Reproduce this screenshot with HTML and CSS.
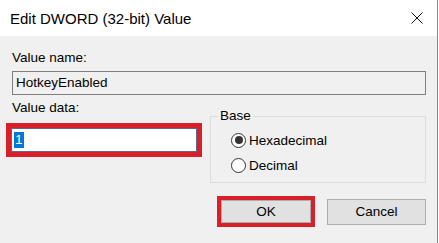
FILE: index.html
```html
<!DOCTYPE html>
<html>
<head>
<meta charset="utf-8">
<link rel="stylesheet" href="styles.css">
</head>
<body>
<div class="window">
  <div class="titlebar">
    <span class="title">Edit DWORD (32-bit) Value</span>
    <svg class="close" width="12" height="12" viewBox="0 0 12 12"><path d="M0.5 0.5 L11.5 11.5 M11.5 0.5 L0.5 11.5" stroke="#111" stroke-width="1" fill="none"/></svg>
  </div>
  <div class="content">
    <div class="label">Value name:</div>
    <div class="textbox readonly">HotkeyEnabled</div>
    <div class="row">
      <div class="left">
        <div class="label">Value data:</div>
        <div class="hl hl-input">
          <div class="textbox focused"><span class="sel">1</span></div>
        </div>
      </div>
      <fieldset class="group">
        <legend>Base</legend>
        <div class="radio"><span class="dot checked"></span><span>Hexadecimal</span></div>
        <div class="radio"><span class="dot"></span><span>Decimal</span></div>
      </fieldset>
    </div>
    <div class="buttons">
      <div class="hl hl-btn"><div class="btn ok">OK</div></div>
      <div class="btn cancel">Cancel</div>
    </div>
  </div>
</div>
</body>
</html>
```
FILE: styles.css
```css
html, body {
  margin: 0;
  padding: 0;
  background: #ffffff;
}
body {
  width: 439px;
  height: 243px;
  overflow: hidden;
  font-family: "Liberation Sans", Arial, sans-serif;
  font-size: 13.5px;
  color: #000;
}
.window {
  width: 437px;
  height: 243px;
  border-right: 1px solid #8a8a8a;
  display: flex;
  flex-direction: column;
}
.titlebar {
  height: 36px;
  flex: none;
  background: #ffffff;
  display: flex;
  align-items: center;
  justify-content: space-between;
  padding-left: 10px;
}
.title {
  font-size: 15px;
  color: #000;
}
.close {
  margin-right: 14px;
  display: block;
}
.content {
  flex: 1;
  background: #f0f0f0;
  padding: 14px 11px 0 12px;
}
.label {
  line-height: 16px;
  height: 16px;
}
.textbox {
  box-sizing: border-box;
  height: 24px;
  line-height: 22px;
  padding-left: 3px;
  border: 1px solid #7f7f7f;
}
.readonly {
  margin-top: 5px;
  background: #f0f0f0;
}
.row {
  display: grid;
  grid-template-columns: 198px 216px;
  margin-top: 5px;
}
.left {
  display: flex;
  flex-direction: column;
}
.hl {
  border: 5px solid #d8202b;
  box-sizing: border-box;
}
.hl-input {
  width: 196px;
  margin-left: -6px;
  margin-top: 7px;
}
.focused {
  background: #fff;
  border-color: #5d6a86;
  padding-left: 2px;
  display: flex;
  align-items: center;
}
.sel {
  background: #0078d7;
  color: #fff;
  line-height: 16px;
  padding: 0 1px;
}
.group {
  margin: 0;
  margin-top: 8px;
  padding: 6px 0 7px 20px;
  border: 1px solid #dcdcdc;
  min-width: 0;
}
.group legend {
  padding: 0 2px;
  margin-left: -13px;
  line-height: 16px;
}
.radio {
  display: flex;
  align-items: center;
  height: 20px;
  gap: 3px;
}
.radio + .radio {
  margin-top: 5px;
}
.dot {
  box-sizing: border-box;
  width: 15px;
  height: 15px;
  border: 1px solid #333;
  border-radius: 50%;
  background: #fff;
  display: flex;
  align-items: center;
  justify-content: center;
}
.dot.checked::after {
  content: "";
  width: 8px;
  height: 8px;
  border-radius: 50%;
  background: #333;
}
.buttons {
  display: flex;
  justify-content: flex-end;
  align-items: center;
  gap: 12px;
  margin-top: 13px;
}
.btn {
  box-sizing: border-box;
  background: #e1e1e1;
  border: 1px solid #adadad;
  display: flex;
  align-items: center;
  justify-content: center;
}
.hl-btn {
  border-width: 4px;
}
.ok {
  width: 90px;
  height: 23px;
}
.cancel {
  width: 99px;
  height: 26px;
}
```
